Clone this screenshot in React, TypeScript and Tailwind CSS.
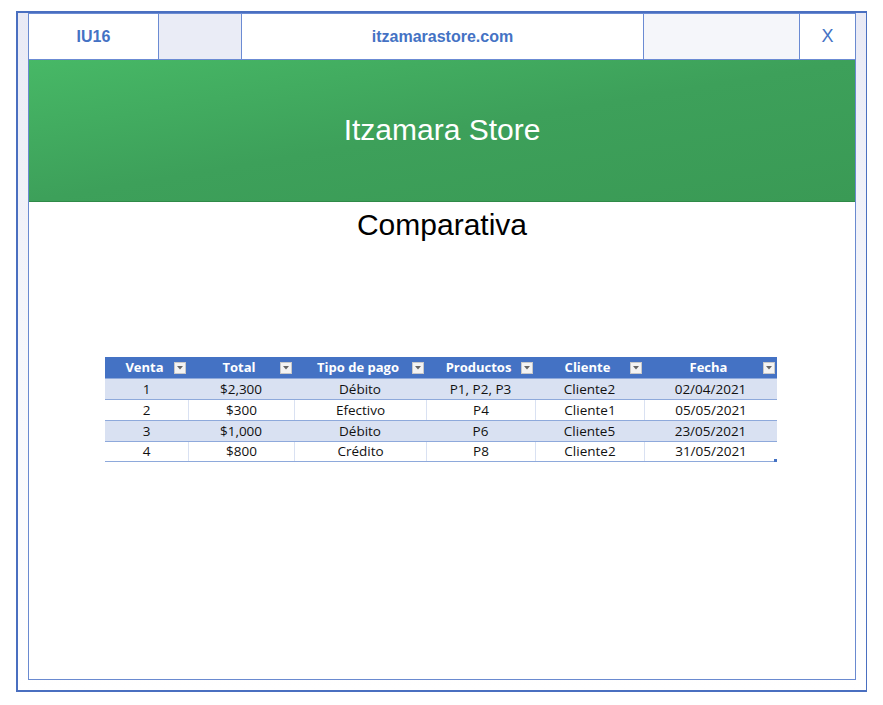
const columns = [
  { label: "Venta", width: "w-[83px]" },
  { label: "Total", width: "w-[106px]" },
  { label: "Tipo de pago", width: "w-[132px]" },
  { label: "Productos", width: "w-[109px]" },
  { label: "Cliente", width: "w-[109px]" },
  { label: "Fecha", width: "w-[133px]" },
];

const rows = [
  ["1", "$2,300", "Débito", "P1, P2, P3", "Cliente2", "02/04/2021"],
  ["2", "$300", "Efectivo", "P4", "Cliente1", "05/05/2021"],
  ["3", "$1,000", "Débito", "P6", "Cliente5", "23/05/2021"],
  ["4", "$800", "Crédito", "P8", "Cliente2", "31/05/2021"],
];

function FilterButton() {
  return (
    <span className="absolute right-[2px] top-1/2 flex h-[12px] w-[12px] -translate-y-1/2 items-center justify-center border border-[#c8c8c8] bg-[#f3f3f3]">
      <svg width="6" height="4" viewBox="0 0 6 4">
        <path d="M0 0h6L3 3.5z" fill="#666" />
      </svg>
    </span>
  );
}

function SalesTable() {
  return (
    <div className="relative w-[672px] font-['Open_Sans',sans-serif] text-[13.5px] text-[#111]">
      <div className="flex h-[21px] bg-[#4472c4] text-[13px] font-bold text-white">
        {columns.map((col) => (
          <div key={col.label} className={`relative flex items-center justify-center ${col.width}`}>
            <span className="-translate-x-[2px]">{col.label}</span>
            <FilterButton />
          </div>
        ))}
      </div>
      {rows.map((row, i) => (
        <div
          key={row[0]}
          className={`flex h-[21px] border-t border-[#8ea9db] ${i % 2 === 0 ? "bg-[#d9e1f2]" : "bg-white"} ${i === rows.length - 1 ? "border-b" : ""}`}
        >
          {row.map((cell, j) => (
            <div
              key={j}
              className={`flex items-center justify-center ${columns[j].width} ${i % 2 === 1 && j > 0 ? "border-l border-[#d9e1f2]" : ""}`}
            >
              {cell}
            </div>
          ))}
        </div>
      ))}
      <span className="absolute bottom-[0px] right-[0px] h-[3px] w-[3px] bg-[#4472c4]" />
    </div>
  );
}

export default function App() {
  return (
    <div className="h-[705px] w-[883px] bg-white pl-[16px] pt-[11px] font-['Liberation_Sans',Arial,sans-serif]">
      <div className="flex h-[681px] w-[851px] border-2 border-r border-[#4a6fc0] bg-gradient-to-b from-[#e9eaf5] via-[#f6f7fb] to-white">
        <div className="ml-[10px] flex h-[667px] w-[828px] flex-col border border-t-0 border-[#6a8ad0] bg-white">
          <div className="flex h-[47px] border-y border-[#6b8bd3] text-[16px] font-bold text-[#4472c4]">
            <div className="flex w-[129px] items-center justify-center">IU16</div>
            <div className="w-[84px] border-x border-[#6b8bd3] bg-[#eaecf6]" />
            <div className="flex w-[401px] items-center justify-center">itzamarastore.com</div>
            <div className="w-[157px] border-x border-[#6b8bd3] bg-[#f5f6fa]" />
            <div className="flex flex-1 items-center justify-center text-[18px] font-normal">X</div>
          </div>
          <div className="flex h-[142px] items-center justify-center border-b border-[#2f8a48] bg-gradient-to-br from-[#47b866] via-[#3da05a] to-[#3a9a55] pb-[2px] text-[30px] text-white">
            Itzamara Store
          </div>
          <div className="flex h-[44px] items-center justify-center text-[30px] text-black">Comparativa</div>
          <div className="mt-[111px] flex pl-[76px]">
            <SalesTable />
          </div>
        </div>
      </div>
    </div>
  );
}
